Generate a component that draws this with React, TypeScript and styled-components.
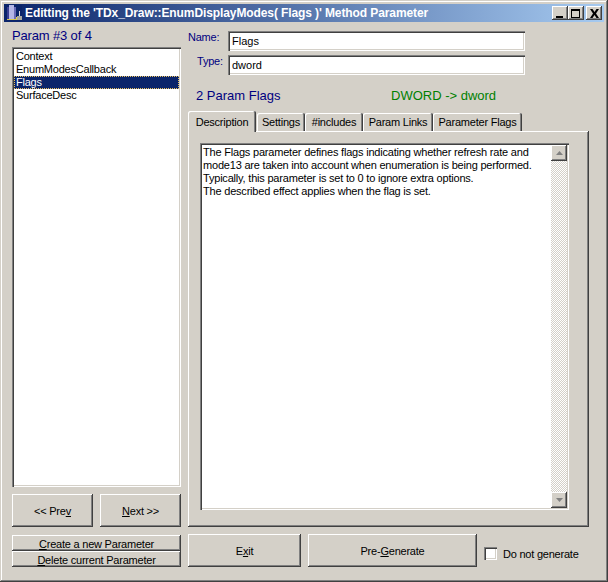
import styled, { createGlobalStyle } from "styled-components"

const Global = createGlobalStyle`
    html, body {
        margin: 0;
        padding: 0;
        background: #d4d0c8;
    }
`

const face = "#d4d0c8"
const uiFont = `"Liberation Sans", Arial, sans-serif`

export default function App() {
    return (
        <>
            <Global />
            <Wrapper>
                <TitleBar>
                    <AppIcon width="16" height="16" viewBox="0 0 16 16">
                        <rect x="0" y="0" width="16" height="16" fill="#0a246a" />
                        <rect x="1" y="2" width="2" height="12" fill="#3a3f92" />
                        <rect x="3" y="0" width="5" height="14" fill="#b4b6e6" />
                        <rect x="8" y="2" width="2" height="12" fill="#6a6cb8" />
                        <rect x="13" y="6" width="1" height="6" fill="#d8d8d8" />
                        <rect x="10" y="12" width="2" height="2" fill="#e8d040" />
                        <rect x="11" y="11" width="5" height="4" fill="#a8a8a0" />
                        <rect x="1" y="14" width="10" height="1" fill="#d8c850" />
                    </AppIcon>
                    <TitleText>Editting the 'TDx_Draw::EnumDisplayModes( Flags )' Method Parameter</TitleText>
                    <CaptionButtons>
                        <CaptionButton aria-label="Minimize">
                            <svg width="10" height="9" viewBox="0 0 10 9"><rect x="1" y="7" width="7" height="2" fill="#000" /></svg>
                        </CaptionButton>
                        <CaptionButton aria-label="Maximize">
                            <svg width="10" height="9" viewBox="0 0 10 9"><path d="M0 0h9v9h-9z M1 2v6h7v-6z" fill="#000" fillRule="evenodd" /></svg>
                        </CaptionButton>
                        <CloseButton aria-label="Close">
                            <svg width="9" height="9" viewBox="0 0 9 9"><path d="M0 0h2.500l2 3 2-3h2.500l-3 4.500 3 4.500h-2.500l-2-3-2 3h-2.500l3-4.500z" fill="#000" /></svg>
                        </CloseButton>
                    </CaptionButtons>
                </TitleBar>

                <Body>
                    <LeftColumn>
                        <ParamCount>Param #3 of 4</ParamCount>
                        <ParamList>
                            <ParamItem>Context</ParamItem>
                            <ParamItem>EnumModesCallback</ParamItem>
                            <ParamItem $selected>Flags</ParamItem>
                            <ParamItem>SurfaceDesc</ParamItem>
                        </ParamList>
                        <NavRow>
                            <Button $h={33}>&lt;&lt; Pre<u>v</u></Button>
                            <Button $h={33}><u>N</u>ext &gt;&gt;</Button>
                        </NavRow>
                        <StackedButtons>
                            <Button $h={16}><u>C</u>reate a new Parameter</Button>
                            <Button $h={16}><u>D</u>elete current Parameter</Button>
                        </StackedButtons>
                    </LeftColumn>

                    <RightColumn>
                        <FieldRow>
                            <FieldLabel>Name:</FieldLabel>
                            <FieldInput>Flags</FieldInput>
                        </FieldRow>
                        <FieldRow>
                            <FieldLabel $type>Type:</FieldLabel>
                            <FieldInput>dword</FieldInput>
                        </FieldRow>
                        <InfoRow>
                            <InfoBlue>2 Param Flags</InfoBlue>
                            <InfoGreen>DWORD -&gt; dword</InfoGreen>
                        </InfoRow>
                        <Tabs>
                            <Tab $active>Description</Tab>
                            <Tab $w={48}>Settings</Tab>
                            <Tab $w={58}>#includes</Tab>
                            <Tab $w={70}>Param Links</Tab>
                            <Tab $w={89}>Parameter Flags</Tab>
                        </Tabs>
                        <TabPanel>
                            <Memo>
                                <MemoText>
                                    The Flags parameter defines flags indicating whether refresh rate and<br />
                                    mode13 are taken into account when enumeration is being performed.<br />
                                    Typically, this parameter is set to 0 to ignore extra options.<br />
                                    The described effect applies when the flag is set.
                                </MemoText>
                                <ScrollBar>
                                    <ScrollButton>
                                        <svg width="7" height="4" viewBox="0 0 7 4"><path d="M3.500 0L7 4H0z" fill="#808080" /></svg>
                                    </ScrollButton>
                                    <ScrollTrack />
                                    <ScrollButton>
                                        <svg width="7" height="4" viewBox="0 0 7 4"><path d="M0 0h7L3.500 4z" fill="#808080" /></svg>
                                    </ScrollButton>
                                </ScrollBar>
                            </Memo>
                        </TabPanel>
                        <ActionRow>
                            <Button $h={33} $w={113}>E<u>x</u>it</Button>
                            <Button $h={33} $w={169}>Pre-<u>G</u>enerate</Button>
                            <CheckWrap>
                                <CheckBox />
                                Do not generate
                            </CheckWrap>
                        </ActionRow>
                    </RightColumn>
                </Body>
            </Wrapper>
        </>
    )
}

const Wrapper = styled.div`
    width: 608px;
    height: 582px;
    box-sizing: border-box;
    background: ${face};
    padding: 4px;
    box-shadow: inset -1px -1px 0 #404040, inset 1px 1px 0 #d4d0c8, inset -2px -2px 0 #808080, inset 2px 2px 0 #fff;
    font-family: ${uiFont};
    font-size: 11px;
    letter-spacing: -0.22px;
    color: #000;
    overflow: hidden;
    display: flex;
    flex-direction: column;
`

const TitleBar = styled.div`
    height: 18px;
    flex: none;
    display: flex;
    align-items: center;
    padding: 0 2px;
    background: linear-gradient(90deg, #0a246a 0%, #a6caf0 100%);
`

const AppIcon = styled.svg`
    flex: none;
    margin-right: 3px;
`

const TitleText = styled.span`
    flex: 1;
    color: #fff;
    font-size: 12px;
    font-weight: bold;
    letter-spacing: -0.1px;
    white-space: nowrap;
`

const CaptionButtons = styled.div`
    display: flex;
`

const CaptionButton = styled.button`
    width: 16px;
    height: 14px;
    padding: 0;
    border: none;
    background: ${face};
    box-shadow: inset -1px -1px 0 #404040, inset 1px 1px 0 #fff, inset -2px -2px 0 #808080;
    display: flex;
    align-items: center;
    justify-content: center;
`

const CloseButton = styled(CaptionButton)`
    margin-left: 2px;
`

const Body = styled.div`
    flex: 1;
    display: flex;
    gap: 7px;
    padding: 0 15px 11px 8px;
`

const LeftColumn = styled.div`
    width: 169px;
    flex: none;
    display: flex;
    flex-direction: column;
`

const ParamCount = styled.div`
    height: 25px;
    line-height: 28px;
    font-size: 13px;
    letter-spacing: -0.15px;
    color: #000080;
    flex: none;
`

const ParamList = styled.div`
    flex: 1;
    background: #fff;
    box-shadow: inset 1px 1px 0 #808080, inset 2px 2px 0 #404040, inset -1px -1px 0 #fff, inset -2px -2px 0 ${face};
    padding: 3px 2px;
`

const ParamItem = styled.div<{ $selected?: boolean }>`
    height: 13px;
    line-height: 13px;
    padding-left: 2px;
    background: ${(p) => (p.$selected ? "#0a246a" : "transparent")};
    color: ${(p) => (p.$selected ? "#fff" : "#000")};
    outline: ${(p) => (p.$selected ? "1px dotted #e8c060" : "none")};
    outline-offset: -1px;
`

const NavRow = styled.div`
    display: flex;
    justify-content: space-between;
    margin-top: 7px;
    flex: none;
    button {
        width: 81px;
    }
`

const StackedButtons = styled.div`
    display: flex;
    flex-direction: column;
    margin-top: 8px;
    flex: none;
`

const Button = styled.button<{ $h: number; $w?: number }>`
    height: ${(p) => p.$h}px;
    width: ${(p) => (p.$w ? `${p.$w}px` : "100%")};
    flex: none;
    padding: 1px 0 0;
    border: none;
    background: ${face};
    color: #000;
    font-family: ${uiFont};
    font-size: 11px;
    letter-spacing: -0.22px;
    box-shadow: inset -1px -1px 0 #404040, inset 1px 1px 0 #fff, inset -2px -2px 0 #808080;
`

const RightColumn = styled.div`
    flex: 1;
    min-width: 0;
    display: flex;
    flex-direction: column;
`

const FieldRow = styled.div`
    display: flex;
    align-items: flex-start;
    height: 24px;
    flex: none;
    &:first-child {
        margin-top: 9px;
    }
`

const FieldLabel = styled.div<{ $type?: boolean }>`
    width: ${(p) => (p.$type ? "31px" : "40px")};
    margin-left: ${(p) => (p.$type ? "9px" : "0")};
    color: #000080;
    line-height: 12px;
`

const FieldInput = styled.div`
    width: 297px;
    height: 20px;
    box-sizing: border-box;
    background: #fff;
    box-shadow: inset 1px 1px 0 #808080, inset 2px 2px 0 #404040, inset -1px -1px 0 #fff, inset -2px -2px 0 ${face};
    padding: 3px 4px;
    font-size: 11px;
    letter-spacing: 0;
    line-height: 14px;
`

const InfoRow = styled.div`
    display: flex;
    height: 31px;
    flex: none;
    padding: 9px 0 0 8px;
    box-sizing: border-box;
    font-size: 13px;
    letter-spacing: 0;
    line-height: 16px;
`

const InfoBlue = styled.div`
    width: 195px;
    color: #000080;
`

const InfoGreen = styled.div`
    color: #008000;
`

const Tabs = styled.div`
    display: flex;
    align-items: flex-end;
    height: 21px;
    flex: none;
    position: relative;
    z-index: 1;
`

const Tab = styled.div<{ $active?: boolean; $w?: number }>`
    width: ${(p) => (p.$active ? "68px" : `${p.$w}px`)};
    height: ${(p) => (p.$active ? "21px" : "18px")};
    margin-bottom: ${(p) => (p.$active ? "-1px" : "0")};
    margin-right: ${(p) => (p.$active ? "1px" : "0")};
    box-sizing: border-box;
    flex: none;
    display: flex;
    align-items: center;
    justify-content: center;
    background: ${face};
    border-radius: 2px 2px 0 0;
    box-shadow: inset -1px 0 0 #404040, inset 1px 1px 0 #fff, inset -2px 0 0 #808080;
`

const TabPanel = styled.div`
    flex: 1;
    min-height: 0;
    box-sizing: border-box;
    padding: 12px 20px 17px 12px;
    box-shadow: inset -1px -1px 0 #404040, inset 1px 1px 0 #fff, inset -2px -2px 0 #808080;
    display: flex;
`

const Memo = styled.div`
    flex: 1;
    display: flex;
    box-sizing: border-box;
    padding: 2px;
    background: #fff;
    box-shadow: inset 1px 1px 0 #808080, inset 2px 2px 0 #404040, inset -1px -1px 0 #fff, inset -2px -2px 0 ${face};
`

const MemoText = styled.div`
    flex: 1;
    padding: 1px 1px;
    line-height: 13px;
    letter-spacing: -0.2px;
    white-space: nowrap;
`

const ScrollBar = styled.div`
    width: 16px;
    flex: none;
    display: flex;
    flex-direction: column;
`

const ScrollButton = styled.div`
    height: 16px;
    flex: none;
    background: ${face};
    box-shadow: inset -1px -1px 0 #404040, inset 1px 1px 0 #fff, inset -2px -2px 0 #808080;
    display: flex;
    align-items: center;
    justify-content: center;
`

const ScrollTrack = styled.div`
    flex: 1;
    background-color: #fff;
    background-image: conic-gradient(${face} 25%, #fff 0 50%, ${face} 0 75%, #fff 0);
    background-size: 2px 2px;
`

const ActionRow = styled.div`
    display: flex;
    align-items: flex-start;
    gap: 7px;
    height: 33px;
    margin-top: 7px;
    flex: none;
`

const CheckWrap = styled.label`
    display: flex;
    align-items: center;
    gap: 6px;
    height: 13px;
    margin-top: 13px;
    white-space: nowrap;
`

const CheckBox = styled.span`
    width: 13px;
    height: 13px;
    box-sizing: border-box;
    background: #fff;
    flex: none;
    box-shadow: inset 1px 1px 0 #808080, inset 2px 2px 0 #404040, inset -1px -1px 0 #fff, inset -2px -2px 0 ${face};
`
